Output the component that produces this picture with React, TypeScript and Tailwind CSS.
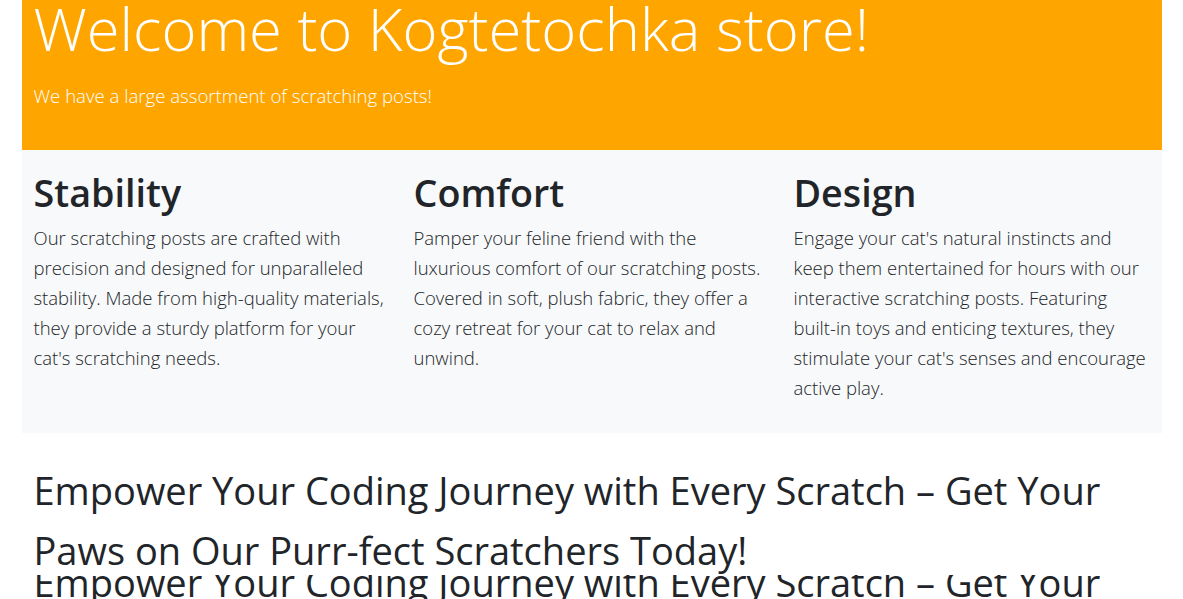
import React from "react";

const features = [
  {
    title: "Stability",
    text: "Our scratching posts are crafted with precision and designed for unparalleled stability. Made from high-quality materials, they provide a sturdy platform for your cat's scratching needs.",
  },
  {
    title: "Comfort",
    text: "Pamper your feline friend with the luxurious comfort of our scratching posts. Covered in soft, plush fabric, they offer a cozy retreat for your cat to relax and unwind.",
  },
  {
    title: "Design",
    text: "Engage your cat's natural instincts and keep them entertained for hours with our interactive scratching posts. Featuring built-in toys and enticing textures, they stimulate your cat's senses and encourage active play.",
  },
];

const slogan = "Empower Your Coding Journey with Every Scratch \u2013 Get Your Paws on Our Purr-fect Scratchers Today!";

export default function App() {
  return (
    <div className="h-screen overflow-hidden bg-white font-['Open_Sans',sans-serif] text-[#212529]">
      <div className="mx-auto w-[1140px]">
        {/* jumbotron */}
        <section className="bg-[#ffa500] px-3 pb-[40px] text-white">
          <h1 className="-mt-2 text-[59.7px] font-light leading-[1.2]">Welcome to Kogtetochka store!</h1>
          <p className="mt-[18px] text-[18.6px] font-light leading-[1.5]">
            We have a large assortment of scratching posts!
          </p>
        </section>

        {/* features */}
        <section className="grid grid-cols-3 bg-[#f8f9fa] pt-[20px] pb-[30px]">
          {features.map((f) => (
            <div key={f.title} className="px-3">
              <h2 className="mb-2 text-[37.7px] font-semibold leading-[1.2]">{f.title}</h2>
              <p className="text-[18.5px] font-light leading-[30px]">{f.text}</p>
            </div>
          ))}
        </section>

        {/* slogan ticker */}
        <section className="px-3 pt-[27px]">
          <p className="relative z-10 h-[115px] bg-white text-[38px] leading-[60px]">{slogan}</p>
          <p className="-mt-[23px] text-[38px] leading-[60px]">{slogan}</p>
        </section>
      </div>
    </div>
  );
}
